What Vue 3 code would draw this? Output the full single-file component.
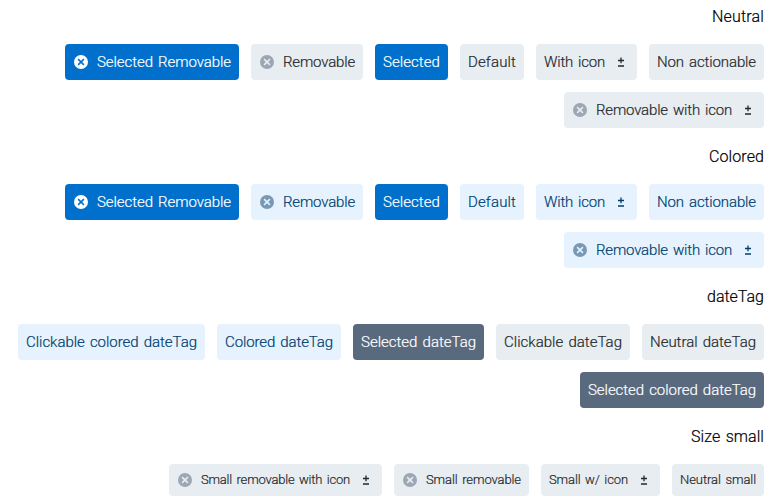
<script setup>
import { onMounted, ref } from 'vue'

const root = ref(null)

const groups = [
  {
    title: 'Neutral', width: 52,
    tags: [
      { label: 'Non actionable', width: 99 },
      { label: 'With icon', width: 61, icon: true },
      { label: 'Default', width: 48 },
      { label: 'Selected', width: 57, tone: 'selected' },
      { label: 'Removable', width: 72, removable: true },
      { label: 'Selected Removable', width: 134, tone: 'selected', removable: true },
      { label: 'Removable with icon', width: 136, removable: true, icon: true },
    ],
  },
  {
    title: 'Colored', width: 55,
    tags: [
      { label: 'Non actionable', width: 99, tone: 'colored' },
      { label: 'With icon', width: 61, tone: 'colored', icon: true },
      { label: 'Default', width: 48, tone: 'colored' },
      { label: 'Selected', width: 57, tone: 'selected' },
      { label: 'Removable', width: 72, tone: 'colored', removable: true },
      { label: 'Selected Removable', width: 134, tone: 'selected', removable: true },
      { label: 'Removable with icon', width: 136, tone: 'colored', removable: true, icon: true },
    ],
  },
  {
    title: 'dateTag', width: 57,
    tags: [
      { label: 'Neutral dateTag', width: 106 },
      { label: 'Clickable dateTag', width: 118 },
      { label: 'Selected dateTag', width: 115, tone: 'date' },
      { label: 'Colored dateTag', width: 108, tone: 'colored' },
      { label: 'Clickable colored dateTag', width: 171, tone: 'colored' },
      { label: 'Selected colored dateTag', width: 168, tone: 'date' },
    ],
  },
  {
    title: 'Size small', width: 73, small: true,
    tags: [
      { label: 'Neutral small', width: 76 },
      { label: 'Small w/ icon', width: 79, icon: true },
      { label: 'Small removable', width: 95, removable: true },
      { label: 'Small removable with icon', width: 149, removable: true, icon: true },
    ],
  },
]

// Distribute each label's spare width evenly between its letters.
onMounted(() => {
  root.value.querySelectorAll('.fit').forEach((el) => {
    const target = el.parentElement.getBoundingClientRect().width
    const natural = el.getBoundingClientRect().width
    el.style.letterSpacing = (target - natural) / el.textContent.length + 'px'
  })
})
</script>

<template>
  <main ref="root" class="page">
    <section v-for="group in groups" :key="group.title" class="group" :class="{ small: group.small }">
      <h2 class="title">
        <span class="text" :style="{ width: group.width + 'px' }"><span class="fit">{{ group.title }}</span></span>
      </h2>
      <div class="tags">
        <span v-for="tag in group.tags" :key="tag.label" class="tag" :class="tag.tone">
          <svg v-if="tag.icon" class="icon" viewBox="0 0 16 16">
            <path d="M5 6.5h6M8 3.6v5.6M5 12h6" fill="none" stroke="currentColor" stroke-width="1.3" />
          </svg>
          <span class="text" :style="{ width: tag.width + 'px' }"><span class="fit">{{ tag.label }}</span></span>
          <svg v-if="tag.removable" class="icon remove" viewBox="0 0 16 16">
            <circle cx="8" cy="8" r="7" fill="currentColor" />
            <path class="cross" d="M5.1 5.1l5.8 5.8M10.9 5.1l-5.8 5.8" />
          </svg>
        </span>
      </div>
    </section>
  </main>
</template>

<style>
body {
  margin: 0;
  background: #fff;
}
</style>

<style scoped>
.page {
  direction: rtl;
  height: 500px;
  overflow: hidden;
  box-sizing: border-box;
  padding: 4px 4px 0;
  font-family: Roboto, "Liberation Sans", sans-serif;
  font-weight: 300;
}
.title {
  display: flex;
  height: 24px;
  margin: 0 0 16px;
  font-size: 16px;
  font-weight: inherit;
  line-height: 25px;
  color: #000;
}
.tags {
  display: flex;
  flex-wrap: wrap;
  gap: 12px;
  margin-bottom: 16px;
}
.tag {
  --bg: #e8edf1;
  display: flex;
  align-items: center;
  gap: 8px;
  height: 36px;
  padding: 0 8px;
  border-radius: 4px;
  background: var(--bg);
  color: #25292d;
  font-size: 15px;
  line-height: 24px;
}
.small .tag {
  height: 32px;
  font-size: 13px;
}
.text {
  display: block;
  direction: ltr;
  white-space: nowrap;
}
.fit {
  display: inline-block;
  word-spacing: 1.5px;
  -webkit-text-stroke: 0.2px currentColor;
}
.icon {
  display: block;
  width: 16px;
  height: 16px;
  flex: none;
}
.remove {
  color: #9da6b5;
}
.cross {
  fill: none;
  stroke: var(--bg);
  stroke-width: 1.5;
}
.colored {
  --bg: #e6f3fe;
  color: #003e70;
}
.colored .remove {
  color: #7899b5;
}
.selected {
  --bg: #0070cc;
  color: #fff;
}
.selected .remove {
  color: #fff;
}
.date {
  --bg: #596a7f;
  color: #fff;
}
</style>
